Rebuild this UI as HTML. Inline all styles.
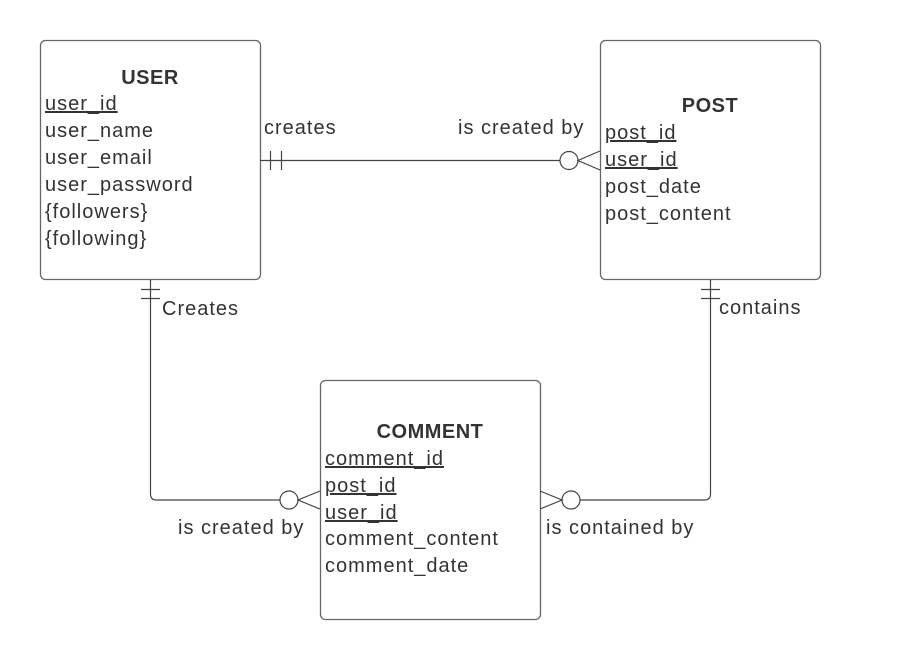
<!DOCTYPE html>
<html><head><style>
body{margin:0;background:#fff;}
svg text{font-family:"Liberation Sans",sans-serif;font-size:20px;fill:#333;letter-spacing:1px;}
</style></head><body>
<svg width="920" height="660" xmlns="http://www.w3.org/2000/svg">
<g fill="#fff" stroke="#666" stroke-width="1.3">
<rect x="40.5" y="40.5" width="220" height="239" rx="5"/>
<rect x="600.5" y="40.5" width="220" height="239" rx="5"/>
<rect x="320.5" y="380.5" width="220" height="239" rx="5"/>
</g>
<g fill="none" stroke="#444" stroke-width="1.2">
<path d="M260 160.5H560"/>
<path d="M270.5 151V170M281.5 151V170"/>
<circle cx="569" cy="160.5" r="9"/>
<path d="M600 151L578 160.5L600 170"/>
<path d="M150.5 280V494q0 6 6 6H280"/>
<path d="M141 289.5H160M141 298.5H160"/>
<circle cx="289" cy="500" r="9"/>
<path d="M320 491L298 500L320 509"/>
<path d="M710.5 280V494q0 6 -6 6H580"/>
<path d="M701 289.5H720M701 298.5H720"/>
<circle cx="571" cy="500" r="9"/>
<path d="M540 491L562 500L540 509"/>
</g>
<g>
<text x="150" y="84" text-anchor="middle" font-weight="bold" style="letter-spacing:0.5px">USER</text>
<text x="45" y="110" text-decoration="underline">user_id</text>
<text x="45" y="137">user_name</text>
<text x="45" y="164">user_email</text>
<text x="45" y="191">user_password</text>
<text x="45" y="218">{followers}</text>
<text x="45" y="245">{following}</text>
<text x="710" y="112" text-anchor="middle" font-weight="bold" style="letter-spacing:0.5px">POST</text>
<text x="605" y="139" text-decoration="underline">post_id</text>
<text x="605" y="166" text-decoration="underline">user_id</text>
<text x="605" y="193">post_date</text>
<text x="605" y="220">post_content</text>
<text x="430" y="438" text-anchor="middle" font-weight="bold" style="letter-spacing:0.5px">COMMENT</text>
<text x="325" y="465" text-decoration="underline">comment_id</text>
<text x="325" y="492" text-decoration="underline">post_id</text>
<text x="325" y="519" text-decoration="underline">user_id</text>
<text x="325" y="545">comment_content</text>
<text x="325" y="572">comment_date</text>
<text x="264" y="134">creates</text>
<text x="458" y="134">is created by</text>
<text x="162" y="315">Creates</text>
<text x="719" y="314">contains</text>
<text x="178" y="534">is created by</text>
<text x="546" y="534">is contained by</text>
</g>
</svg>
</body></html>
